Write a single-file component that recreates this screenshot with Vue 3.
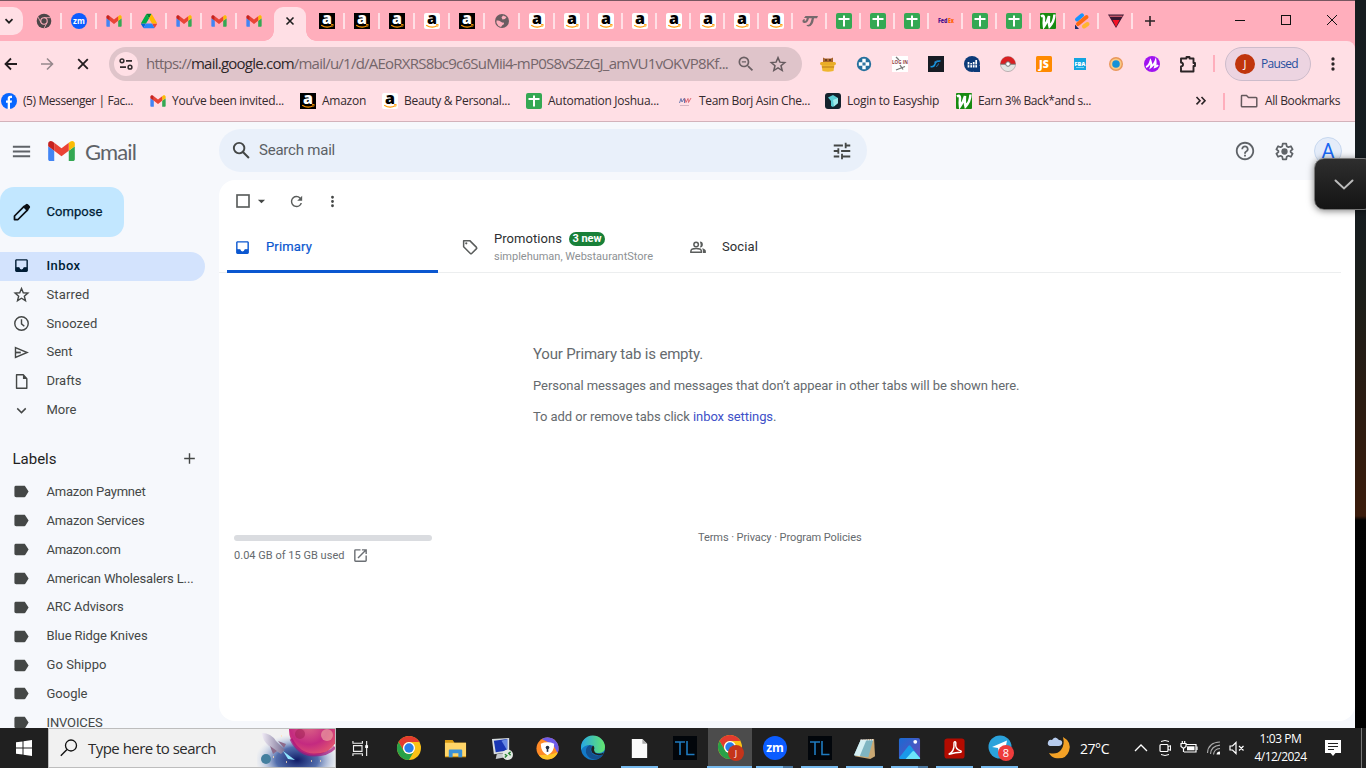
<script setup>
import { h } from 'vue'

const GMAIL = '<path fill="#4285f4" d="M58 108h14V74L52 59v43c0 3.32 2.69 6 6 6"/><path fill="#34a853" d="M120 108h14c3.32 0 6-2.69 6-6V59l-20 15"/><path fill="#fbbc04" d="M120 48v26l20-15v-8c0-7.42-8.47-11.65-14.4-7.2"/><path fill="#ea4335" d="M72 74V48l24 18 24-18v26L96 92"/><path fill="#c5221f" d="M52 51v8l20 15V48l-5.6-4.2c-5.94-4.45-14.4-.22-14.4 7.2"/>'
const amazon = (bg, fg) => `<rect width="16" height="16" rx="${bg === '#000' ? 0 : 2}" fill="${bg}"/><text x="8" y="10.800" text-anchor="middle" font-family="Open Sans, sans-serif" font-weight="800" font-size="16" fill="${fg}">a</text><path d="M2.2 12.2q5.6 3.6 11 .6" fill="none" stroke="#f90" stroke-width="1.3"/><path d="M12 11.6l2.2-.1-.5 2.1" fill="none" stroke="#f90" stroke-width=".9"/>`
const chromeBall = '<circle cx="12" cy="12" r="12" fill="#fbc116"/><path d="M1.6 6A12 12 0 0 1 22.4 6H12a6 6 0 0 0-5.2 9z" fill="#e33b2e"/><path d="M1.6 6A12 12 0 0 0 12 24l5.2-9a6 6 0 0 1-10.4 0z" fill="#28a148"/><circle cx="12" cy="12" r="6" fill="#fff"/><circle cx="12" cy="12" r="4.7" fill="#2a7de9"/>'
const tl = '<rect width="24" height="24" fill="#02060b"/><path d="M2 6h10M7 6v13M14 5v13.500h7.500" fill="none" stroke="#1f7bc0" stroke-width="1.600"/>'

// name: [viewBox, markup]
const icons = {
  down: ['0 0 16 16', '<path d="M4.500 6.200L8 9.700l3.500-3.500" fill="none" stroke="#1f1f1f" stroke-width="1.700"/>'],
  chromeGrey: ['0 0 24 24', '<circle cx="12" cy="12" r="11" fill="#4b4648"/><path d="M12 7h10M7.500 14.500L3 6M16.500 14.500L12 23" stroke="#ffaebc" stroke-width="1.200"/><circle cx="12" cy="12" r="5.600" fill="#ffaebc"/><circle cx="12" cy="12" r="4" fill="#4b4648"/>'],
  zoom: ['0 0 24 24', '<circle cx="12" cy="12" r="12" fill="#0b5cff"/><text x="12" y="16" text-anchor="middle" font-family="Open Sans, sans-serif" font-weight="700" font-size="12" fill="#fff">zm</text>'],
  gmail: ['50 36 92 78', GMAIL],
  drive: ['0 0 87 78', '<path d="M6.600 66.850l3.850 6.650c.8 1.400 1.950 2.500 3.300 3.300L27.500 53H0c0 1.550.4 3.100 1.200 4.500z" fill="#0066da"/><path d="M43.650 25L29.900 1.200c-1.350.8-2.500 1.900-3.300 3.300L1.200 48.500A9 9 0 0 0 0 53h27.500z" fill="#00ac47"/><path d="M73.550 76.800c1.350-.8 2.500-1.900 3.300-3.300l1.600-2.750L86.100 57.500c.8-1.400 1.200-2.950 1.200-4.500H59.800l5.850 11.500z" fill="#ea4335"/><path d="M43.650 25L57.400 1.200C56.050.4 54.500 0 52.900 0H34.400c-1.600 0-3.150.45-4.500 1.200z" fill="#00832d"/><path d="M59.800 53H27.500L13.750 76.800c1.350.8 2.900 1.200 4.500 1.200h50.800c1.600 0 3.150-.45 4.500-1.200z" fill="#2684fc"/><path d="M73.400 26.500l-12.700-22c-.8-1.400-1.950-2.500-3.300-3.300L43.650 25 59.800 53h27.450c0-1.550-.4-3.100-1.200-4.500z" fill="#ffba00"/>'],
  amazonDark: ['0 0 16 16', amazon('#000', '#fff')],
  amazonLight: ['0 0 16 16', amazon('#fff', '#000')],
  globe: ['0 0 16 16', '<circle cx="8" cy="8" r="7" fill="#6a5d61"/><path d="M2.500 7.500q2.500-.5 4 1t3.500 1q.5 2-1.500 2.500L7 14q-3.500-1-4.500-4zM9 2.500l3.500 1.500-1.500 2-2.500.5-1-2z" fill="#ffaebc"/>'],
  tesla: ['0 0 16 16', '<path d="M3.500 3H16l-1 2.200h-3Q11 13.500 6.500 13.500q-2-.3-2-1.500 3 .5 4-2.500l1.300-4.300H7L6 8Q4.500 10.500 2 10 0 9.500.5 7.500 1 6 3 6.200L2.500 8 4 7.500 4.700 5H2z" fill="#75696c"/>'],
  sheet: ['0 0 16 16', '<rect width="16" height="16" rx="2" fill="#34a853"/><path d="M2.500 6h11M8 2.500v11" stroke="#fff" stroke-width="2"/>'],
  fedex: ['0 0 16 16', '<text x="0" y="10" font-family="Open Sans, sans-serif" font-weight="800" font-size="6" textLength="9.500" lengthAdjust="spacingAndGlyphs" fill="#4d148c">Fed</text><text x="10" y="10" font-family="Open Sans, sans-serif" font-weight="800" font-size="6" textLength="6" lengthAdjust="spacingAndGlyphs" fill="#ff6200">Ex</text>'],
  webstaurant: ['0 0 16 16', '<rect width="16" height="16" rx="1" fill="#188a10"/><path d="M1 3.500q3-2 3 1.500Q3.500 10 4 13.500 7.500 9 9 3 8.500 10 9.500 13.500 14 9 14.500 1.500" fill="none" stroke="#fff" stroke-width="2.500"/>'],
  stripes: ['0 0 16 16', '<path d="M3 6.500l5-4.200" stroke="#1593ff" stroke-width="4" stroke-linecap="round"/><path d="M4 11l8.500-7" stroke="#ff6a13" stroke-width="4" stroke-linecap="round"/><path d="M10 13.500L13.500 11" stroke="#ffb52e" stroke-width="4" stroke-linecap="round"/><path d="M1 11.500V16h4z" fill="#152b6b"/>'],
  triangle: ['0 0 16 16', '<path d="M0 1.500h16L8 15z" fill="#391832"/><path d="M4.500 7h7L8 14z" fill="#f31224"/><path d="M1.500 3.200h13" stroke="#ff7181"/>'],
  plus: ['0 0 16 16', '<path d="M8 3v10M3 8h10" stroke="#2c2326" stroke-width="1.600"/>'],
  close: ['0 0 16 16', '<path d="M4.500 4.500l7 7m0-7l-7 7" stroke="#1f1f1f" stroke-width="1.600"/>'],
  min: ['0 0 16 16', '<path d="M3 8.500h10" stroke="#111"/>'],
  max: ['0 0 16 16', '<rect x="3.500" y="3.500" width="9" height="9" fill="none" stroke="#111"/>'],
  x: ['0 0 16 16', '<path d="M3 3l10 10M13 3L3 13" stroke="#111"/>'],
  back: ['0 0 16 16', '<path d="M14 8H3M8 2.500L2.500 8 8 13.500" fill="none" stroke="#231d1f" stroke-width="1.800"/>'],
  fwd: ['0 0 16 16', '<path d="M2 8h11M8 2.500L13.500 8 8 13.500" fill="none" stroke="#96888c" stroke-width="1.600"/>'],
  stop: ['0 0 16 16', '<path d="M3.200 3.200l9.600 9.600m0-9.600l-9.600 9.600" stroke="#231d1f" stroke-width="1.800"/>'],
  site: ['0 0 16 16', '<circle cx="4" cy="4.800" r="1.900" fill="none" stroke="#332c2e" stroke-width="1.500"/><path d="M8 4.800h6M2 11.200h6" stroke="#332c2e" stroke-width="1.700"/><circle cx="12" cy="11.200" r="1.900" fill="none" stroke="#332c2e" stroke-width="1.500"/>'],
  zoomOut: ['0 0 24 24', '<path d="M15.500 14h-.79l-.28-.27A6.471 6.471 0 0 0 16 9.500 6.500 6.500 0 1 0 9.500 16c1.610 0 3.090-.59 4.230-1.570l.27.28v.79l5 4.990L20.490 19l-4.990-5zm-6 0C7.010 14 5 11.990 5 9.500S7.010 5 9.500 5 14 7.010 14 9.500 11.990 14 9.500 14zM7 8.700h5v1.600H7z" fill="#6b6064"/>'],
  star: ['0 0 24 24', '<path d="M12 3.500l2.500 6 6.500.5-5 4.300 1.600 6.400L12 17.300l-5.600 3.400L8 14.300 3 10l6.500-.5z" fill="none" stroke="currentColor" stroke-width="2"/>'],
  honey: ['0 0 16 16', '<path d="M3 6V1.500l2 1h6l2-1V6" fill="#a9652d"/><circle cx="6" cy="4" r=".7"/><circle cx="10" cy="4" r=".7"/><rect y="6" width="16" height="3" rx="1.500" fill="#e9ac28"/><path d="M1.500 9h13l-1 6q-5.500 1.500-11 0z" fill="#efb62e"/><path d="M2 11h12" stroke="#b87919"/>'],
  cross: ['0 0 16 16', '<circle cx="8" cy="8" r="7.200" fill="#246f9c"/><path d="M8 2.800v3.400M8 9.800v3.400M2.800 8h3.400M9.800 8h3.400" stroke="#fff" stroke-width="3.400"/><rect x="6.300" y="6.300" width="3.400" height="3.400" fill="#fff"/><path d="M8 6.500v3M6.500 8h3" stroke="#246f9c" stroke-width="1.400"/>'],
  login: ['0 0 16 16', '<rect width="16" height="16" fill="#fff"/><text x="0" y="8" font-family="Open Sans, sans-serif" font-weight="700" font-size="4.500" textLength="16" fill="#8d3940">LOG IN</text><path d="M4 14l9-3.500M8 9l3 4.500M4 1l3 3" stroke="#777" stroke-width="1.300"/>'],
  arc: ['0 0 16 16', '<rect width="16" height="16" fill="#171c24"/><path d="M2.500 10.500q3.500.8 4.500-2.500t5.500-3" fill="none" stroke="#1694df" stroke-width="1.500"/><path d="M6 6.500q2-2 4-1.500M8 10.500q2 0 2.500-3" fill="none" stroke="#2a77b8"/>'],
  bars: ['0 0 16 16', '<circle cx="8" cy="8" r="8" fill="#0c3a78"/><path d="M9 10h7v6H10z" fill="#0c3a78"/><path d="M4.500 6v5.500M7.200 7v4.500M9.700 6v5.500M12.200 4v7.500" stroke="#fff" stroke-width="1.700"/><path d="M3.500 8.700h10" stroke="#0c3a78" stroke-width=".7"/>'],
  poke: ['0 0 16 16', '<circle cx="8" cy="8" r="7.600" fill="#e3e4e2" stroke="#9b9294" stroke-width=".6"/><path d="M.4 8a7.600 7.600 0 0 1 15.200 0z" fill="#d91f22"/><path d="M.5 8.200h15" stroke="#766" stroke-width="1"/><circle cx="8" cy="8" r="2.300" fill="#fff" stroke="#777"/>'],
  js: ['0 0 16 16', '<rect width="16" height="16" rx="1.500" fill="#ff8a00"/><text x="8" y="12" text-anchor="middle" font-family="Open Sans, sans-serif" font-weight="800" font-size="10.500" fill="#fff">JS</text>'],
  fba: ['0 0 16 16', '<rect x="2" y="2" width="12" height="12" fill="#13a5e0"/><text x="8" y="9.500" text-anchor="middle" font-family="Open Sans, sans-serif" font-weight="800" font-size="5.600" fill="#fff">FBA</text><path d="M4 11.500h8" stroke="#7fd1f1"/>'],
  lens: ['0 0 16 16', '<circle cx="8" cy="8" r="7" fill="#e9975a"/><circle cx="8" cy="8" r="5.600" fill="#f8c985"/><circle cx="8" cy="8" r="3.800" fill="#1492d8"/>'],
  purple: ['0 0 16 16', '<circle cx="8" cy="8" r="8" fill="#a013f0"/><path d="M2 11q3-1 4.500-6 1.500 3 .5 6 3-2 4.500-6 .5 3-.5 6 2-.5 3-2" fill="none" stroke="#fff" stroke-width="2"/>'],
  puzzle: ['0 0 20 20', '<path d="M3 4.500h5.500V3h3v1.500h4v4.500h1.500v3h-1.500v5.500H3v-5q2-.3 2-2t-2-2z" fill="none" stroke="#2b2426" stroke-width="1.900" stroke-linejoin="round"/>'],
  dots: ['0 0 24 24', '<path d="M12 8a2 2 0 1 0 0-4 2 2 0 0 0 0 4zm0 2a2 2 0 1 0 0 4 2 2 0 0 0 0-4zm0 6a2 2 0 1 0 0 4 2 2 0 0 0 0-4z" fill="currentColor"/>'],
  fb: ['0 0 16 16', '<circle cx="8" cy="8" r="8" fill="#0866ff"/><path d="M11 5H9.700Q9 5 9 5.800V7.500h2l-.4 2.200H9V16H6.700V9.700H5V7.500h1.700V5.400Q6.700 2.800 9.300 2.800H11z" fill="#fff"/>'],
  mw: ['0 0 16 16', '<path d="M2.500 10L4 5.500l1 3.500 2.500-4v5" fill="none" stroke="#6c78ad"/><path d="M8 5.500l1 4 2-4 .5 4L14 5" fill="none" stroke="#dd6c78"/><path d="M3 12.500h9" stroke="#c3a4b3" stroke-width=".7"/>'],
  easyship: ['0 0 16 16', '<rect width="16" height="16" rx="3" fill="#14222d"/><path d="M3 4.500L8 2l5 3v5l-5 4-2-1V8z" fill="#59cbd2"/><path d="M8 7l5-2v5l-4 3.500z" fill="#9eeaeb"/>'],
  folder: ['0 0 18 16', '<path d="M1.500 3Q1.500 2.500 2 2.500h4.500L8.500 4.500H16q.8 0 .8.800V13q0 .8-.8.800H2.200q-.8 0-.8-.8z" fill="none" stroke="#65595d" stroke-width="1.500"/>'],
  more: ['0 0 16 16', '<path d="M3.500 4L7 7.700l-3.500 3.700M8.500 4L12 7.700l-3.500 3.700" fill="none" stroke="#2b2426" stroke-width="1.600"/>'],
  menu: ['0 0 24 24', '<path d="M3 18h18v-2H3v2zm0-5h18v-2H3v2zm0-7v2h18V6H3z" fill="#5f6368"/>'],
  gmailBig: ['52 42 88 66', GMAIL],
  search: ['0 0 24 24', '<path d="M20.490 19l-5.730-5.730C15.530 12.200 16 10.910 16 9.500A6.500 6.500 0 1 0 9.500 16c1.410 0 2.700-.47 3.770-1.240L19 20.490 20.490 19zM5 9.500C5 7.010 7.010 5 9.500 5S14 7.010 14 9.500 11.990 14 9.500 14 5 11.990 5 9.500z" fill="#444746"/>'],
  tune: ['0 0 24 24', '<path d="M3 17v2h6v-2H3zM3 5v2h10V5H3zm10 16v-2h8v-2h-8v-2h-2v6h2zM7 9v2H3v2h4v2h2V9H7zm14 4v-2H11v2h10zm-6-4h2V7h4V5h-4V3h-2v6z" fill="#444746"/>'],
  help: ['0 0 24 24', '<path d="M11 18h2v-2h-2v2zm1-16C6.480 2 2 6.480 2 12s4.480 10 10 10 10-4.480 10-10S17.520 2 12 2zm0 18c-4.410 0-8-3.590-8-8s3.590-8 8-8 8 3.590 8 8-3.590 8-8 8zm0-14c-2.210 0-4 1.790-4 4h2c0-1.100.9-2 2-2s2 .9 2 2c0 2-3 1.750-3 5h2c0-2.250 3-2.500 3-5 0-2.210-1.790-4-4-4z" fill="#5f6368"/>'],
  gear: ['0 0 24 24', '<path d="M10 3h4l.5 2.900 2 1.200 2.800-1.100 2 3.500L19 11.300v1.400l2.300 1.800-2 3.500-2.800-1.100-2 1.200L14 21h-4l-.5-2.900-2-1.200L4.700 18l-2-3.500L5 12.700v-1.400L2.700 9.500l2-3.500 2.800 1.100 2-1.200z" fill="none" stroke="#5f6368" stroke-width="2" stroke-linejoin="round"/><circle cx="12" cy="12" r="3.600" fill="#5f6368"/>'],
  pencil: ['0 0 24 24', '<path d="M4 20v-4L15 5l4 4L8 20z" fill="none" stroke="#0b0f14" stroke-width="2" stroke-linejoin="round"/><path d="M13.500 5.500L17 2.500q1.200-1 2.400.2l2 2q1 1.200 0 2.200L18.500 10.500z" fill="#0b0f14"/>'],
  inbox: ['0 0 24 24', '<path d="M19 3H5c-1.100 0-2 .9-2 2v14c0 1.100.9 2 2 2h14c1.100 0 2-.9 2-2V5c0-1.100-.9-2-2-2zm0 11.500h-4c0 1.660-1.350 3-3 3s-3-1.340-3-3H5V5h14v9.500z" fill="currentColor"/><path d="M4 15h4.500q1 3.500 3.500 3.500t3.500-3.500H20v5H4z" fill="currentColor"/>'],
  clock: ['0 0 24 24', '<circle cx="12" cy="12" r="9.500" fill="none" stroke="currentColor" stroke-width="2"/><path d="M12 6v6.500l4 3.500" fill="none" stroke="currentColor" stroke-width="2"/>'],
  send: ['0 0 24 24', '<path d="M3.500 5L20 12 3.500 19z" fill="none" stroke="currentColor" stroke-width="2"/><path d="M3 12h8" stroke="currentColor" stroke-width="2.500"/>'],
  draft: ['0 0 24 24', '<path d="M5 2.500h9.500L19.500 8v13.500H5z" fill="none" stroke="currentColor" stroke-width="2" stroke-linejoin="round"/><path d="M14 2v6.500h6z" fill="currentColor"/>'],
  chevron: ['0 0 24 24', '<path d="M6 9l6 6 6-6" fill="none" stroke="currentColor" stroke-width="2"/>'],
  label: ['0 0 24 24', '<path d="M17.630 5.340C17.270 4.830 16.670 4 16 4L4.500 4.010C3 4.010 2 4.900 2 6v12c0 1.100 1 1.990 2.500 1.990L16 20c.67 0 1.270-.33 1.630-.84L22 12l-4.370-6.660z" fill="#444746"/>'],
  add: ['0 0 24 24', '<path d="M12 4.500v15M4.500 12h15" stroke="#444746" stroke-width="2"/>'],
  box: ['0 0 24 24', '<rect x="4" y="4" width="16" height="16" fill="none" stroke="#5a5d5c" stroke-width="2.200"/>'],
  caret: ['0 0 10 10', '<path d="M1 3h8L5 7z" fill="#444746"/>'],
  refresh: ['0 0 24 24', '<path d="M17.650 6.350A7.958 7.958 0 0 0 12 4a8 8 0 1 0 7.730 10h-2.080A5.990 5.990 0 0 1 12 18c-3.310 0-6-2.690-6-6s2.690-6 6-6c1.660 0 3.140.69 4.220 1.780L13 11h7V4l-2.350 2.350z" fill="#5a5d5c"/>'],
  tag: ['0 0 24 24', '<path d="M3.500 3.500h8.200l9 9q.8.900 0 1.700l-6.500 6.500q-.9.800-1.700 0l-9-9z" fill="none" stroke="#5a5d5c" stroke-width="2" stroke-linejoin="round"/><circle cx="7" cy="7" r="1.500" fill="#5a5d5c"/>'],
  people: ['0 0 24 24', '<circle cx="9.500" cy="8.500" r="3" fill="none" stroke="#5a5d5c" stroke-width="2"/><path d="M2.500 19v-1.500q0-3.500 7-3.500t7 3.500V19z" fill="none" stroke="#5a5d5c" stroke-width="2"/><path d="M14.500 4.500q4 0 4 4t-4 4q2-4 0-8zM17.500 13.500q5 1 5 4V20h-4v-3q0-2-1-3.500z" fill="#5a5d5c"/>'],
  open: ['0 0 24 24', '<path d="M19 19H5V5h7V3H5a2 2 0 0 0-2 2v14a2 2 0 0 0 2 2h14c1.100 0 2-.9 2-2v-7h-2v7zM14 3v2h3.590l-9.830 9.830 1.410 1.410L19 6.410V10h2V3h-7z" fill="#6b6f74"/>'],
  overlayDown: ['0 0 20 12', '<path d="M1.500 1.500L10 9.500l8.500-8" fill="none" stroke="#bbb" stroke-width="2" stroke-linecap="round"/>'],
  windows: ['0 0 16 16', '<path d="M0 2.300L6.500 1.400V7.500H0zM7.500 1.200L16 0v7.500H7.500zM0 8.500h6.500v6.100L0 13.700zM7.500 8.500H16V16l-8.500-1.200z" fill="#fff"/>'],
  find: ['0 0 18 18', '<circle cx="11" cy="6.500" r="5.500" fill="none" stroke="#111" stroke-width="1.300"/><path d="M7 10.500L.8 16.700" stroke="#111" stroke-width="1.400"/>'],
  space: ['0 0 78 38', '<defs><radialGradient id="nebula"><stop offset="0" stop-color="#101b66"/><stop offset=".5" stop-color="#2a4c9a" stop-opacity=".8"/><stop offset="1" stop-color="#b5c9ee" stop-opacity="0"/></radialGradient><radialGradient id="planet" cx=".4" cy=".4" r=".65"><stop offset="0" stop-color="#dd6a86"/><stop offset=".6" stop-color="#c42a80"/><stop offset="1" stop-color="#e2566f"/></radialGradient><linearGradient id="hull"><stop offset="0" stop-color="#efeaf5"/><stop offset="1" stop-color="#756c91"/></linearGradient></defs><ellipse cx="40" cy="31" rx="42" ry="26" fill="url(#nebula)"/><circle cx="57" cy="1" r="25" fill="url(#planet)"/><path d="M34 10q8 16 23 16t21-8" fill="none" stroke="#a8127a" stroke-width="3" opacity=".7"/><circle cx="43" cy="5" r="5" fill="#9b1e50" opacity=".5"/><circle cx="70" cy="6" r="6" fill="#f2b0a5" opacity=".6"/><circle cx="9" cy="30" r="5" fill="#447f9f"/><path d="M5 4q9 0 14 8l9 9-4 4L12 17Q5 11 5 4z" fill="url(#hull)"/><path d="M13 17l3 8 4-3zM21 12l8 3-2 4z" fill="#8d6a8a"/><path d="M26 22l12 9-7-1z" fill="#91e6ff"/><path d="M16 28h1M29 33h1M54 32h1M63 32h1M24 7h1" stroke="#ffe1b8" stroke-width="1.500"/>'],
  taskview: ['0 0 18 18', '<path d="M1 1v2.500h10V1M1 17v-2.500h10V17M1.600 6h9v6h-9zM15.500 1v16" fill="none" stroke="#eee" stroke-width="1.200"/><rect x="14" y="5.500" width="3" height="3" fill="#fff"/>'],
  chrome: ['0 0 24 24', chromeBall],
  explorer: ['0 0 24 24', '<path d="M1 3h8l2 3h12v15H1z" fill="#d99a12"/><path d="M1 6h22v14H1z" fill="#ffd568"/><path d="M5 21v-7q0-1 1-1h12q1 0 1 1v7h-4v-4H9v4z" fill="#3a91d8"/>'],
  rdp: ['0 0 24 24', '<path d="M2 2l18-1v15L4 18z" fill="#d7dce0"/><path d="M4 4l14-2v12L6 16z" fill="#1936b3"/><path d="M12 4l6-2v12z" fill="#6688e3"/><path d="M7 18l6-1 3 4-10 2z" fill="#c5c9cd"/><circle cx="18.500" cy="18.500" r="5.500" fill="#e2e8e3"/><path d="M15.500 18l2 1.500-2 2M21.500 15.500l-2 1.500 2 2" fill="none" stroke="#278434" stroke-width="1.500"/>'],
  avast: ['0 0 24 24', '<circle cx="12" cy="12" r="11.500" fill="#ff8a26"/><path d="M6 2.200A11.500 11.500 0 0 1 22.500 17L18 8z" fill="#6d5be9"/><path d="M22.800 16A11.500 11.500 0 0 1 3 19l13-1z" fill="#ffc526"/><path d="M5 7q7-3 14 0 0 9-7 12-7-3-7-12z" fill="#fff"/><circle cx="12" cy="11" r="1.900" fill="#263045"/><path d="M12 11v4.500" stroke="#263045" stroke-width="1.700"/>'],
  edge: ['0 0 24 24', '<defs><linearGradient id="edgeTop"><stop offset="0" stop-color="#27a7e5"/><stop offset="1" stop-color="#64e66c"/></linearGradient></defs><circle cx="12" cy="12" r="12" fill="#137ac8"/><path d="M0 12A12 12 0 0 1 24 11q0 6-7 6-5 0-4-3 1-5-4-5-6 0-9 5z" fill="url(#edgeTop)"/><path d="M9 9q-5 2-4 8 3 7 10 6.500 5-1 7-5-9 3-12-3-1-3 1-5z" fill="#14508f"/><path d="M13 14q1-3-1-4.500-3 3-1 7 4 4 11 2l.8-2Q18 19 14 16.500z" fill="#202020"/>'],
  doc: ['0 0 24 24', '<path d="M4 2h11l5 5v15H4z" fill="#fafafa"/><path d="M15 2v5h5z" fill="#aaa"/>'],
  tl: ['0 0 24 24', tl],
  chromeJ: ['-1 0 26 26', chromeBall + '<circle cx="18" cy="18" r="8" fill="#c5351b"/><text x="18" y="21.500" text-anchor="middle" font-family="Open Sans, sans-serif" font-size="9" fill="#fff">J</text>'],
  notepad: ['0 0 24 24', '<path d="M8 3l14-1 1 18-5 3L2 20z" fill="#caa873"/><path d="M8 3h13l-5 18L1 19z" fill="#7fb5c2"/><path d="M8 3h6L7 20l-6-1z" fill="#d5eff3"/><path d="M8 3h13" stroke="#eee" stroke-width="2" stroke-dasharray="1 1"/>'],
  photos: ['0 0 24 24', '<defs><linearGradient id="sky" x2="1" y2="1"><stop offset="0" stop-color="#186bd4"/><stop offset="1" stop-color="#6a4bb8"/></linearGradient></defs><rect x="1" y="1" width="22" height="22" rx="2" fill="url(#sky)"/><path d="M1 22L11 9q1-1 2 0l10 13-2 1H2z" fill="#1999e8"/><path d="M8 23l7-8q1-1 2 0l6 7v1z" fill="#6ce4fa"/><circle cx="18" cy="5" r="2" fill="#fff"/>'],
  acrobat: ['0 0 24 24', '<rect x="1.500" y="1.500" width="21" height="21" rx="3" fill="#b30b00"/><path d="M6 18q6-3 5.500-11-.2-2 1-2t.8 2.500q-.8 5 5.200 7 1 .6 0 1.500-5 0-12 2z" fill="none" stroke="#fff" stroke-width="1.500"/>'],
  telegram: ['-1 0 26 26', '<circle cx="12" cy="12" r="11.500" fill="#2ba2db"/><path d="M4 12L19 5.500 16.500 18l-4-3-2 2-.5-4z" fill="#fff"/><circle cx="18" cy="18" r="8" fill="#ee3c3c"/><text x="18" y="22" text-anchor="middle" font-family="Open Sans, sans-serif" font-size="11" fill="#fff">8</text>'],
  moon: ['0 0 24 24', '<path d="M16 1Q25 6 22 15T8 22Q4 21 2 17q8 2 12-3t2-13z" fill="#f3a126"/><path d="M3 10q-3-1-2-4t4-2q3-5 7 0 4 0 3 4-1 2-3 2z" fill="#b6cbed"/>'],
  tray: ['0 0 16 16', '<path d="M2 11l6-6 6 6" fill="none" stroke="#fff" stroke-width="1.300"/>'],
  cam: ['0 0 16 16', '<rect x="3" y="4.500" width="8" height="7" rx="1" fill="none" stroke="#fff" stroke-width="1.200"/><path d="M11 7l2.500-1.500v5L11 9M4 1.500q4-2 8 0M4 14.500q4 2 8 0" fill="none" stroke="#fff"/>'],
  battery: ['0 0 18 16', '<path d="M6 4.500h10v7.500H4" fill="none" stroke="#fff" stroke-width="1.200"/><path d="M7 6.300h7.500v4H7z" fill="#fff"/><path d="M17 6.500v3.500M1 3.500h5v3l-2.500 2L1 6.500zM2.300 1v2.500M4.700 1v2.500M3.500 8v4" stroke="#fff" stroke-width="1.200" fill="none"/>'],
  wifi: ['0 0 16 16', '<path d="M1.500 13Q2 2.500 14 2M4.500 14Q5 6 14 5.200M7.500 14.500Q8 9 14 8.500" fill="none" stroke="#aaa" stroke-width="1.200"/><path d="M10.500 14.500q.3-3 3.500-3v3z" fill="#fff"/>'],
  mute: ['0 0 16 16', '<path d="M1 6v4h2.500L7 13.500v-11L3.500 6zM10 6l4.500 4.500M14.500 6L10 10.500" fill="none" stroke="#fff" stroke-width="1.200"/>'],
  note: ['0 0 16 16', '<path d="M0 0h16v13h-5.500L8 16l-2.500-3H0z" fill="#fff"/><path d="M3 3.500h10M3 6.500h10M3 9.500h6" stroke="#222"/>']
}

const Icon = ({ name, size = 16, w }) =>
  h('svg', { viewBox: icons[name][0], width: w || size, height: size, innerHTML: icons[name][1], class: 'ico' })
Icon.props = ['name', 'size', 'w']

// Spreads the letters so that a line takes up the given width.
const vFit = {
  mounted(el, { value }) {
    if (!value) return
    const natural = el.getBoundingClientRect().width
    el.style.letterSpacing = (value - natural) / el.textContent.length + 'px'
  }
}

const tabsLeft = ['chromeGrey', 'zoom', 'gmail', 'drive', 'gmail', 'gmail', 'gmail']
const tabsMid = ['amazonDark', 'amazonDark', 'amazonDark', 'amazonLight', 'amazonDark', 'globe', 'amazonLight']
const tabsRight = ['amazonLight', 'amazonLight', 'amazonLight', 'amazonLight', 'amazonLight', 'amazonLight', 'amazonLight', 'tesla', 'sheet', 'sheet', 'sheet', 'fedex', 'sheet', 'sheet', 'webstaurant', 'stripes', 'triangle']
const extensions = ['honey', 'cross', 'login', 'arc', 'bars', 'poke', 'js', 'fba', 'lens', 'purple']
const bookmarks = [
  ['fb', '(5) Messenger | Fac...', 110],
  ['gmail', 'You’ve been invited...', 112],
  ['amazonDark', 'Amazon', 44],
  ['amazonLight', 'Beauty & Personal...', 106],
  ['sheet', 'Automation Joshua...', 111],
  ['mw', 'Team Borj Asin Che...', 111],
  ['easyship', 'Login to Easyship', 92],
  ['webstaurant', 'Earn 3% Back*and s...', 113]
]
const folders = [
  ['inbox', 'Inbox', 34],
  ['star', 'Starred', 43],
  ['clock', 'Snoozed', 51],
  ['send', 'Sent', 26],
  ['draft', 'Drafts', 35],
  ['chevron', 'More', 30]
]
const labels = [
  ['Amazon Paymnet', 99], ['Amazon Services', 98], ['Amazon.com', 74], ['American Wholesalers L...', 147],
  ['ARC Advisors', 77], ['Blue Ridge Knives', 101], ['Go Shippo', 60], ['Google', 41], ['INVOICES', 56]
]
const pinned = ['chrome', 'explorer', 'rdp', 'avast', 'edge']
const running = ['doc', 'tl', 'chromeJ', 'zoom', 'tl', 'notepad', 'photos', 'acrobat', 'telegram']
const iconSize = { tl: 24, chromeJ: 26, telegram: 26, chrome: 24, edge: 24, zoom: 24 }
</script>

<template>
  <div class="screen">
    <div class="upper">
      <div class="browser">
        <div class="tabstrip">
          <div class="tabsearch"><Icon name="down" /></div>
          <div v-for="(t, i) in tabsLeft" :key="'l' + i" class="tab wide" :class="{ nosep: i === 6 }"><Icon :name="t" /></div>
          <div class="tab active"><Icon name="close" /></div>
          <div v-for="(t, i) in tabsMid" :key="'m' + i" class="tab wide"><Icon :name="t" /></div>
          <div v-for="(t, i) in tabsRight" :key="'r' + i" class="tab"><Icon :name="t" /></div>
          <div class="newtab"><Icon name="plus" /></div>
          <div class="winbtns"><Icon name="min" /><Icon name="max" /><Icon name="x" /></div>
        </div>
        <div class="toolbar">
          <div class="nav"><Icon name="back" /><Icon name="fwd" /><Icon name="stop" /></div>
          <div class="omnibox">
            <span class="site"><Icon name="site" /></span>
            <span v-fit="582" class="url">https://<b>mail.google.com</b>/mail/u/1/d/AEoRXRS8bc9c6SuMii4-mP0S8vSZzGJ_amVU1vOKVP8Kf...</span>
            <Icon class="oz" name="zoomOut" :size="20" /><Icon class="os" name="star" :size="18" />
          </div>
          <div class="exts">
            <Icon v-for="e in extensions" :key="e" :name="e" />
            <Icon name="puzzle" :size="20" />
          </div>
          <i class="pinksep"></i>
          <div class="paused"><span class="pj">J</span><span v-fit="37">Paused</span></div>
          <Icon class="kebab" name="dots" :size="20" />
        </div>
        <div class="bookmarks">
          <div class="marks">
            <div v-for="b in bookmarks" :key="b[1]" class="mark"><Icon :name="b[0]" /><span v-fit="b[2]">{{ b[1] }}</span></div>
          </div>
          <Icon name="more" />
          <i class="pinksep two"></i>
          <div class="allmarks"><Icon name="folder" :w="18" /><span v-fit="75">All Bookmarks</span></div>
        </div>

        <div class="gmail">
          <header class="head">
            <Icon name="menu" :size="23" />
            <Icon class="glogo" name="gmailBig" :w="27" :size="20" />
            <div class="brand"><span v-fit="51">Gmail</span></div>
            <div class="search">
              <Icon name="search" :size="23" /><span v-fit="76" class="ph">Search mail</span><Icon name="tune" :size="22" />
            </div>
            <Icon class="hhelp" name="help" :size="22" />
            <Icon class="hgear" name="gear" :size="21" />
            <span class="avatar">A</span>
          </header>
          <div class="body">
            <nav class="side">
              <div class="compose"><Icon name="pencil" :size="21" /><span v-fit="56">Compose</span></div>
              <div class="folders">
                <div v-for="(f, i) in folders" :key="f[1]" class="row" :class="{ sel: i === 0 }">
                  <Icon :name="f[0]" :size="17" /><span v-fit="f[2]">{{ f[1] }}</span>
                </div>
              </div>
              <div class="lhead"><span v-fit="44">Labels</span><Icon name="add" :size="17" /></div>
              <div v-for="l in labels" :key="l[0]" class="row lab"><Icon name="label" :size="17" /><span v-fit="l[1]">{{ l[0] }}</span></div>
            </nav>
            <main class="panel">
              <div class="actions">
                <Icon name="box" :size="18" /><Icon class="car" name="caret" :size="9" />
                <Icon class="ref" name="refresh" :size="17" /><Icon class="kb" name="dots" :size="17" />
              </div>
              <div class="cats">
                <div class="cat on"><Icon name="inbox" :size="17" /><span v-fit="46">Primary</span></div>
                <div class="cat promo">
                  <Icon name="tag" :size="18" />
                  <div class="pcol">
                    <div class="pline"><span v-fit="68">Promotions</span><em><span v-fit="29">3 new</span></em></div>
                    <span v-fit="159" class="senders">simplehuman, WebstaurantStore</span>
                  </div>
                </div>
                <div class="cat soc"><Icon name="people" :size="18" /><span v-fit="36">Social</span></div>
              </div>
              <div class="empty">
                <p class="big"><span v-fit="170">Your Primary tab is empty.</span></p>
                <p><span v-fit="486.500">Personal messages and messages that don’t appear in other tabs will be shown here.</span></p>
                <p><span v-fit="160">To add or remove tabs click </span><a v-fit="80">inbox settings</a>.</p>
              </div>
              <footer class="foot">
                <div class="quota">
                  <div class="bar"></div>
                  <div class="used"><span v-fit="110.500">0.04 GB of 15 GB used</span><Icon name="open" :size="17" /></div>
                </div>
                <div class="terms"><span v-fit="163.500">Terms · Privacy · Program Policies</span></div>
              </footer>
            </main>
          </div>
        </div>
      </div>
      <div class="desktop"></div>
      <div class="overlay"><Icon name="overlayDown" :w="20" :size="12" /></div>
    </div>

    <div class="taskbar">
      <div class="start"><Icon name="windows" /></div>
      <div class="find"><Icon name="find" :size="18" /><span v-fit="128">Type here to search</span><Icon class="art" name="space" :w="78" :size="38" /></div>
      <div class="tv"><Icon name="taskview" :size="17" /></div>
      <div v-for="p in pinned" :key="p" class="app pin"><Icon :name="p" :size="iconSize[p] || 23" /></div>
      <div class="running">
        <div v-for="(p, i) in running" :key="p + i" class="app" :class="{ cur: i === 2, off: i === 1, multi: i === 3 || i === 6 }"><Icon :name="p" :size="iconSize[p] || 23" /></div>
      </div>
      <div class="weather"><Icon name="moon" :size="24" /><span v-fit="29">27°C</span></div>
      <div class="trayset">
        <Icon name="tray" /><Icon name="cam" /><Icon name="battery" :w="18" /><Icon name="wifi" /><Icon name="mute" />
      </div>
      <div class="clockbox"><span v-fit="42">1:03 PM</span><span v-fit="52">4/12/2024</span></div>
      <Icon class="notif" name="note" />
      <i class="peek"></i>
    </div>
  </div>
</template>

<style>
body { margin: 0; overflow: hidden; }
.ico { display: block; flex: none; overflow: visible; }
</style>

<style scoped>
.screen { width: 1366px; height: 768px; display: flex; flex-direction: column; overflow: hidden; font-family: "Open Sans", "Noto Sans", sans-serif; }
.screen span { white-space: nowrap; }
.upper { height: 728px; display: flex; position: relative; overflow: hidden; }
.browser { width: 1355px; height: 728px; display: flex; flex-direction: column; background: #ffaebc; overflow: hidden; }
.desktop { width: 11px; background: linear-gradient(#171d1f 0, #151c20 200px, #1b1e1a 290px, #2b1c12 400px, #3b1c0c 516px, #030303 520px, #000 728px); }

.tabstrip { height: 41px; box-sizing: border-box; border-top: 1px solid #775660; display: flex; background: #ffaebc; flex: none; }
.tabsearch { width: 23px; height: 28px; margin: 6px 3px 0 0; border-radius: 0 10px 10px 0; background: #ffdfe5; display: flex; align-items: center; box-sizing: border-box; padding-left: 1px; }
.tab { width: 34px; height: 40px; box-sizing: border-box; padding: 12px 0 0 10px; position: relative; flex: none; }
.tab.wide { width: 35px; }
.tab::after { content: ""; position: absolute; right: -1px; top: 12px; width: 2px; height: 16px; background: #ffdfe5; }
.tab.nosep::after { display: none; }
.tab.active { width: 32px; height: 34px; margin: 6px 3px 0; padding: 6px 0 0 8px; background: #ffdfe5; border-radius: 9px 9px 0 0; }
.tab.active::before, .tab.active::after { content: ""; position: absolute; top: auto; bottom: 0; width: 10px; height: 10px; }
.tab.active::before { left: -10px; background: radial-gradient(circle at 0 0, transparent 9.5px, #ffdfe5 10px); }
.tab.active::after { right: -10px; background: radial-gradient(circle at 100% 0, transparent 9.5px, #ffdfe5 10px); }
.newtab { margin: 12px 0 0 10px; }
.winbtns { margin: 11px 15px 0 auto; display: flex; gap: 30px; }

.toolbar { height: 44px; background: #ffdfe5; border-radius: 0 8px 0 0; display: flex; align-items: center; flex: none; padding-top: 1px; box-sizing: border-box; }
.nav { width: 106px; padding-left: 3px; display: flex; gap: 20px; }
.omnibox { width: 693px; height: 34px; border-radius: 17px; background: #dfc4ca; display: flex; align-items: center; box-sizing: border-box; padding-left: 5px; }
.site { width: 24px; height: 24px; border-radius: 50%; background: #ffdfe5; display: grid; place-items: center; margin-right: 8px; }
.url { font-size: 15px; color: #74666a; margin-right: 8px; padding-bottom: 1px; }
.url b { font-weight: 400; color: #2d2628; }
.os { margin-left: 13px; color: #655a5e; }
.exts { display: flex; align-items: center; gap: 20px; margin-left: 18px; }
.exts .ico:last-child { margin-left: -2px; }
.pinksep { width: 2px; height: 17px; background: #ffaebc; margin-left: 15px; }
.paused { box-sizing: border-box; width: 86px; height: 34px; border: 1px solid #cdbccb; border-radius: 17px; background: #ecd4e1; margin-left: 10px; display: flex; align-items: center; padding-left: 9px; gap: 6px; font-size: 12px; color: #274f9e; }
.pj { width: 20px; height: 20px; border-radius: 50%; background: #c0350c; color: #fff; text-align: center; line-height: 20px; font-size: 11px; }
.kebab { margin-left: 12px; color: #2b2426; }
.bookmarks { height: 37px; box-sizing: border-box; border-bottom: 1px solid #d3b2ba; background: #ffdfe5; display: flex; align-items: center; padding: 0 0 4px 1px; font-size: 12px; color: #34292d; flex: none; }
.marks { display: grid; grid-template-columns: 149px 150px 82px 144px 151px 148px 131px 237px; }
.mark { display: flex; align-items: center; gap: 6px; height: 17px; }
.mark span, .allmarks span { padding-bottom: 1px; }
.pinksep.two { margin-left: 14px; }
.allmarks { display: flex; align-items: center; gap: 7px; margin-left: 15px; }

.gmail { height: 606px; background: #f6f8fc; font-family: Roboto, "Open Sans", sans-serif; color: #444746; }
.head { height: 58px; display: flex; align-items: center; padding-left: 10px; box-sizing: border-box; }
.glogo { margin-left: 15px; }
.brand { font-size: 22px; font-family: Lato, sans-serif; color: #5f6368; margin-left: 10px; width: 134px; flex: none; }
.search { width: 648px; height: 43px; border-radius: 22px; background: #e9f0fa; display: flex; align-items: center; box-sizing: border-box; padding: 0 14px 0 11px; margin-top: -1px; flex: none; }
.search .ph { font-size: 15px; margin-left: 6px; color: #5b6065; padding-bottom: 1px; }
.search .ico:last-child { margin-left: auto; }
.hhelp { margin-left: 367px; }
.hgear { margin-left: 18px; }
.avatar { width: 28px; height: 28px; box-sizing: border-box; border: 1px solid #c7d8ef; border-radius: 50%; background: #e4ecf9; margin-left: 19px; text-align: center; line-height: 26px; color: #1967f2; font-size: 20px; }
.body { display: flex; height: 548px; overflow: hidden; }
.side { width: 219px; height: 548px; overflow: hidden; font-size: 13px; }
.compose { width: 124px; height: 50px; margin-top: 7px; border-radius: 0 15px 15px 0; background: #c2e7ff; display: flex; align-items: center; box-sizing: border-box; padding-left: 11px; gap: 14.500px; color: #001d35; -webkit-text-stroke: .25px #001d35; border-radius: 14px; }
.compose span { padding-bottom: 1px; }
.folders { margin-top: 15px; }
.row { height: 28.850px; width: 205px; display: flex; align-items: center; padding: 0 0 1px 12.500px; gap: 17px; box-sizing: border-box; }
.row span { padding-bottom: 1px; }
.row.sel { background: #d3e3fd; border-radius: 0 15px 15px 0; color: #001d35; font-weight: 500; }
.lhead { height: 53px; display: flex; align-items: center; justify-content: space-between; width: 185px; padding: 0 0 0 12.500px; font-size: 15px; color: #1f1f1f; margin-top: 7px; margin-bottom: -7px; }
.panel { width: 1136px; height: 541px; border-radius: 16px; background: #fff; overflow: hidden; }
.actions { height: 42px; display: flex; align-items: center; padding-left: 15px; color: #444746; }
.car { margin-left: 5px; }
.ref { margin-left: 22px; }
.kb { margin-left: 19px; }
.cats { width: 1122px; height: 51px; box-sizing: border-box; border-bottom: 1px solid #eceeef; display: flex; padding-left: 8px; font-size: 13px; color: #2d2f31; }
.cat { width: 228px; height: 50px; display: flex; align-items: center; box-sizing: border-box; padding: 0 0 0 7px; gap: 15px; }
.cat.on { width: 211px; height: 51px; border-bottom: 3px solid #0b57d0; border-radius: 3px 3px 0 0; color: #0b57d0; -webkit-text-stroke: .2px #0b57d0; margin-right: 16px; position: relative; }
.cat.on .ico { margin-top: 2px; }
.soc span { padding-bottom: 2px; }
.pcol { display: flex; flex-direction: column; padding-top: 2px; }
.pline { display: flex; align-items: center; height: 17px; gap: 7px; }
.pline em { font-style: normal; background: #188038; color: #fff; font-weight: 700; font-size: 11px; width: 36px; height: 14px; line-height: 14px; border-radius: 7px; display: flex; justify-content: center; }
.senders { font-size: 11px; color: #8d9194; line-height: 19px; }
.empty { padding: 71px 0 0 314px; font-size: 13px; color: #656a6e; height: 170px; }
.empty p { margin: 0; height: 31px; line-height: 20px; white-space: nowrap; }
.empty p span { white-space: pre; }
.empty .big { font-size: 15px; height: 32px; }
.empty a { color: #4050c8; }
.foot { display: flex; font-size: 11px; color: #656a6e; padding: 21px 0 0 15px; }
.quota { width: 464px; }
.bar { width: 198px; height: 6px; border-radius: 3px; background: #dadce0; }
.used { display: flex; align-items: center; gap: 7px; margin-top: 6px; }
.terms { line-height: 14px; margin-top: -4px; }
.overlay { position: absolute; left: 1314px; top: 158px; width: 60px; height: 52px; box-sizing: border-box; border: 1px solid #777; border-radius: 10px; background: linear-gradient(#2e2e2e, #141414); display: flex; align-items: center; padding: 2px 0 0 19px; box-shadow: 0 1px 7px rgba(0, 0, 0, .5); }

.taskbar { height: 40px; background: #202020; display: flex; align-items: center; color: #fff; }
.start { width: 48px; display: grid; place-items: center; }
.find { width: 288px; height: 40px; box-sizing: border-box; border: 1px solid #bdbdbd; background: #f1f1f1; display: flex; align-items: center; padding-left: 11px; color: #2b2b2b; font-size: 15px; flex: none; }
.find span { margin-left: 10px; }
.find .art { margin-left: auto; overflow: hidden; }
.tv { width: 49px; display: flex; justify-content: center; flex: none; padding-right: 1px; }
.running { display: flex; margin-left: 1px; width: 405px; flex: none; }
.app { width: 45px; height: 40px; display: flex; justify-content: center; align-items: center; position: relative; flex: none; }
.app.pin { width: 46px; }
.app::after { content: ""; position: absolute; left: 4px; right: 4px; bottom: 0; height: 2px; background: #76b9ed; }
.app.pin::after, .app.off::after { display: none; }
.app.multi::after { background: linear-gradient(90deg, #76b9ed 27px, #4b78a0 27px); }
.app.cur { background: linear-gradient(#4c4c4c, #4c4c4c) center / 44px 100% no-repeat; }
.app.cur::after { left: 0; right: 0; }
.weather { display: flex; align-items: center; gap: 9px; margin-left: 25px; font-size: 14px; width: 86px; flex: none; }
.trayset { display: flex; gap: 7.500px; align-items: center; width: 121px; flex: none; }
.clockbox { width: 53px; display: flex; flex-direction: column; align-items: center; font-size: 12px; line-height: 18px; flex: none; }
.notif { margin-left: 18px; }
.peek { width: 1px; height: 40px; background: #777; margin-left: 20px; }
</style>
